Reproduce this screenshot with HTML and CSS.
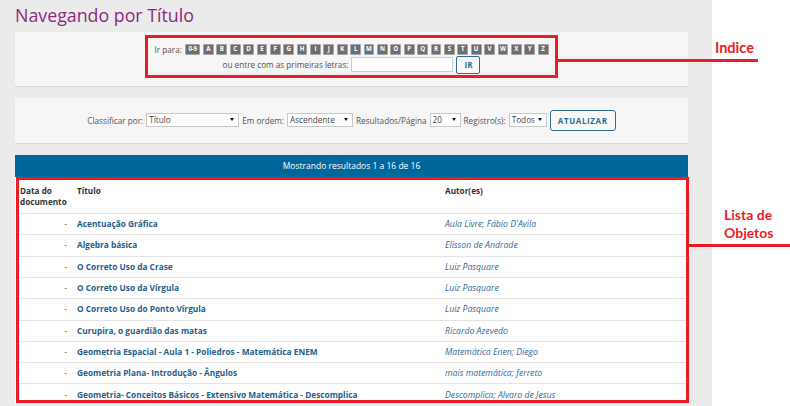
FILE: index.html
```html
<!DOCTYPE html>
<html lang="pt-BR">
<head>
<meta charset="utf-8">
<title>Navegando por Título</title>
<link rel="stylesheet" href="styles.css">
</head>
<body>
<div class="page">
  <main class="main">
    <h1 class="title">Navegando por Título</h1>

    <section class="panel panel-jump">
      <div class="jump annotated">
        <div class="jump-row">
          <span class="label">Ir para:</span>
          <span class="letters">
            <a class="letter wide">0-9</a><a class="letter">A</a><a class="letter">B</a><a class="letter">C</a><a class="letter">D</a><a class="letter">E</a><a class="letter">F</a><a class="letter">G</a><a class="letter">H</a><a class="letter">I</a><a class="letter">J</a><a class="letter">K</a><a class="letter">L</a><a class="letter">M</a><a class="letter">N</a><a class="letter">O</a><a class="letter">P</a><a class="letter">Q</a><a class="letter">R</a><a class="letter">S</a><a class="letter">T</a><a class="letter">U</a><a class="letter">V</a><a class="letter">W</a><a class="letter">X</a><a class="letter">Y</a><a class="letter">Z</a>
          </span>
        </div>
        <div class="jump-row jump-row-2">
          <span class="label">ou entre com as primeiras letras:</span>
          <span class="text-input"></span>
          <button class="btn btn-ir">IR</button>
        </div>
        <span class="callout-line callout-line-indice"></span>
        <span class="callout-text callout-text-indice">Indice</span>
      </div>
    </section>

    <section class="panel panel-sort">
      <span class="label">Classificar por:</span>
      <span class="select select-sort">Título</span>
      <span class="label">Em ordem:</span>
      <span class="select select-order">Ascendente</span>
      <span class="label">Resultados/Página</span>
      <span class="select select-rpp">20</span>
      <span class="label">Registro(s):</span>
      <span class="select select-rec">Todos</span>
      <button class="btn btn-update">ATUALIZAR</button>
    </section>

    <section class="results">
      <div class="results-head">Mostrando resultados 1 a 16 de 16</div>
      <div class="results-body annotated">
        <div class="table-clip">
          <table class="results-table">
            <colgroup><col class="c-date"><col class="c-title"><col class="c-author"></colgroup>
            <thead>
              <tr><th class="th-date">Data do documento</th><th>Título</th><th>Autor(es)</th></tr>
            </thead>
            <tbody>
              <tr><td class="date">-</td><td class="t">Acentuação Gráfica</td><td class="a">Aula Livre; Fábio D'Avila</td></tr>
              <tr><td class="date">-</td><td class="t">Algebra básica</td><td class="a">Elisson de Andrade</td></tr>
              <tr><td class="date">-</td><td class="t">O Correto Uso da Crase</td><td class="a">Luiz Pasquare</td></tr>
              <tr><td class="date">-</td><td class="t">O Correto Uso da Vírgula</td><td class="a">Luiz Pasquare</td></tr>
              <tr><td class="date">-</td><td class="t">O Correto Uso do Ponto Vírgula</td><td class="a">Luiz Pasquare</td></tr>
              <tr><td class="date">-</td><td class="t">Curupira, o guardião das matas</td><td class="a">Ricardo Azevedo</td></tr>
              <tr><td class="date">-</td><td class="t">Geometria Espacial - Aula 1 - Poliedros - Matemática ENEM</td><td class="a">Matemática Enen; Diego</td></tr>
              <tr><td class="date">-</td><td class="t">Geometria Plana- Introdução - Ângulos</td><td class="a">mais matemática; ferreto</td></tr>
              <tr><td class="date">-</td><td class="t">Geometria- Conceitos Básicos - Extensivo Matemática - Descomplica</td><td class="a">Descomplica; Alvaro de Jesus</td></tr>
            </tbody>
          </table>
        </div>
        <span class="callout-line callout-line-lista"></span>
        <span class="callout-text callout-text-lista">Lista de<br>Objetos</span>
      </div>
    </section>
  </main>
</div>
</body>
</html>
```

FILE: styles.css
```css
* { box-sizing: border-box; }

body {
  margin: 0;
  background: #ffffff;
  font-family: "Open Sans", "DejaVu Sans", sans-serif;
  color: #444;
}

.page {
  width: 790px;
  height: 406px;
  overflow: hidden;
}

.main {
  width: 712px;
  min-height: 406px;
  background: #ebebeb;
  padding: 0 24px 0 15px;
}

.title {
  margin: 0 0 2.7px;
  padding-top: 2.3px;
  font-size: 17.8px;
  line-height: 27px;
  font-weight: 400;
  color: #8d2a7b;
}

.panel {
  background: #f6f6f6;
  box-shadow: 0 1px 1px rgba(0, 0, 0, 0.08);
}

.label {
  font-size: 8.2px;
  color: #555;
  white-space: nowrap;
}

/* ---- jump panel ---- */
.panel-jump {
  height: 54px;
  padding-top: 3px;
  display: flex;
  justify-content: center;
  align-items: flex-start;
}

.annotated {
  position: relative;
  border: 3px solid #ec1c24;
}

.jump {
  width: 413px;
  height: 43px;
  padding-top: 6px;
  display: flex;
  flex-direction: column;
  align-items: center;
}

.jump-row {
  display: flex;
  align-items: center;
  height: 11px;
  gap: 3px;
}

.jump-row-2 {
  height: 18px;
  margin-top: 1px;
}

.letters {
  display: flex;
  gap: 2.6px;
}

.letter {
  display: flex;
  align-items: center;
  justify-content: center;
  width: 10.8px;
  height: 10.5px;
  background: #6e6e6e;
  border: 1px solid #a6a6a6;
  border-radius: 1px;
  color: #fff;
  font-size: 6.2px;
  font-weight: 700;
  line-height: 1;
}

.letter.wide { width: 15.5px; letter-spacing: -0.3px; }

.text-input {
  width: 102px;
  height: 15px;
  background: #fff;
  border: 1px solid #cfcfcf;
}

.btn {
  font-family: inherit;
  font-weight: 700;
  color: #2c6d98;
  background: #f8f8f8;
  border: 1.5px solid #2c6d98;
  border-radius: 2px;
  padding: 0;
  cursor: pointer;
}

.btn-ir {
  width: 24px;
  height: 18px;
  font-size: 8px;
}

.callout-line {
  position: absolute;
  height: 3px;
  background: #ec1c24;
}

.callout-text {
  position: absolute;
  font-family: "Lato", "Open Sans", sans-serif;
  font-weight: 700;
  color: #ec1c24;
  white-space: nowrap;
}

.callout-line-indice {
  left: calc(100% + 3px);
  top: 21px;
  width: 200px;
}

.callout-text-indice {
  left: calc(100% + 160px);
  top: 3px;
  font-size: 14.5px;
  line-height: 1;
}

/* ---- sort panel ---- */
.panel-sort {
  margin-top: 12px;
  height: 45px;
  display: flex;
  justify-content: center;
  align-items: center;
  gap: 3px;
}

.select {
  position: relative;
  height: 14px;
  background: #fff;
  border: 1px solid #c9c9c9;
  font-size: 8.2px;
  line-height: 12px;
  padding-left: 2px;
  color: #444;
}

.select::after {
  content: "";
  position: absolute;
  right: 4px;
  top: 4px;
  border-left: 2.2px solid transparent;
  border-right: 2.2px solid transparent;
  border-top: 3.5px solid #111;
}

.select-sort { width: 93px; }
.select-order { width: 66px; }
.select-rpp { width: 31px; }
.select-rec { width: 38px; }

.btn-update {
  width: 66px;
  height: 21px;
  font-size: 8px;
  letter-spacing: 0.6px;
  border-radius: 3px;
}

/* ---- results ---- */
.results {
  margin-top: 12px;
  width: 673px;
  background: #fff;
}

.results-head {
  height: 22px;
  background: #00679b;
  color: #fff;
  font-size: 8.5px;
  line-height: 22px;
  text-align: center;
}

.results-body {
  margin-left: 1px;
  width: 673px;
  height: 226px;
  background: #fff;
}

.table-clip {
  height: 100%;
  overflow: hidden;
}

.results-table {
  width: 100%;
  border-collapse: collapse;
  table-layout: fixed;
  font-size: 8.3px;
}

.c-date { width: 58px; }
.c-title { width: 368px; }

.results-table th {
  text-align: left;
  vertical-align: top;
  font-weight: 700;
  font-size: 8.2px;
  color: #333;
  line-height: 11px;
  padding: 5px 0 6px;
}

.results-table th.th-date { padding-left: 1px; }

.results-table td {
  line-height: 12px;
  padding: 4.17px 0;
  border-top: 1px solid #e4e4e4;
  white-space: nowrap;
}

.results-table thead tr { border-bottom: 1px solid #e4e4e4; }

.results-table td.date {
  text-align: right;
  padding-right: 10px;
  color: #555;
}

.results-table td.t {
  font-weight: 700;
  color: #1d5f8e;
}

.results-table td.a {
  font-style: italic;
  font-size: 8.7px;
  color: #33699a;
}

.callout-line-lista {
  left: calc(100% + 3px);
  top: 64px;
  width: 110px;
}

.callout-text-lista {
  left: calc(100% + 38px);
  top: 26px;
  font-size: 14px;
  line-height: 18px;
}
```
